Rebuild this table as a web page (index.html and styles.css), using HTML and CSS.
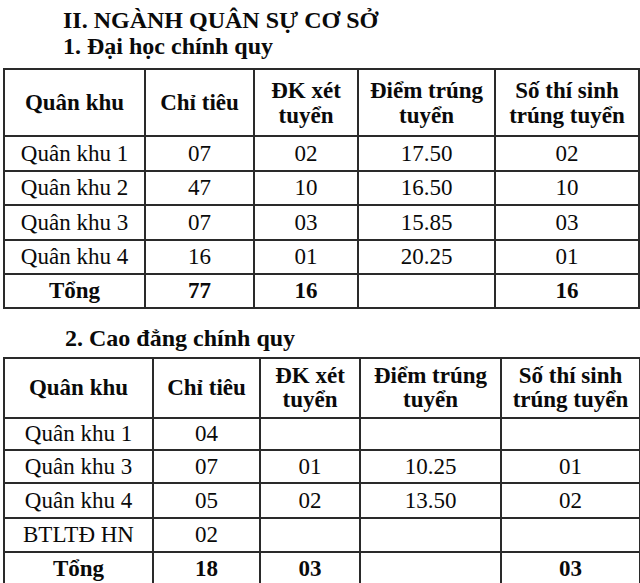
FILE: index.html
```html
<!DOCTYPE html>
<html lang="vi">
<head>
<meta charset="utf-8">
<link rel="stylesheet" href="styles.css">
</head>
<body>
<div class="page">
  <div class="heading">
    <div class="h-line">II. NGÀNH QUÂN SỰ CƠ SỞ</div>
    <div class="h-line">1. Đại học chính quy</div>
  </div>
  <table class="grid t1">
    <colgroup>
      <col class="c1"><col class="c2"><col class="c3"><col class="c4"><col class="c5">
    </colgroup>
    <tr class="head">
      <th>Quân khu</th><th>Chỉ tiêu</th><th>ĐK xét<br>tuyển</th><th>Điểm trúng<br>tuyển</th><th>Số thí sinh<br>trúng tuyển</th>
    </tr>
    <tr class="r35"><td>Quân khu 1</td><td>07</td><td>02</td><td>17.50</td><td>02</td></tr>
    <tr class="r34"><td>Quân khu 2</td><td>47</td><td>10</td><td>16.50</td><td>10</td></tr>
    <tr class="r35"><td>Quân khu 3</td><td>07</td><td>03</td><td>15.85</td><td>03</td></tr>
    <tr class="r34"><td>Quân khu 4</td><td>16</td><td>01</td><td>20.25</td><td>01</td></tr>
    <tr class="r34 total"><td>Tổng</td><td>77</td><td>16</td><td></td><td>16</td></tr>
  </table>
  <div class="subheading">2. Cao đẳng chính quy</div>
  <table class="grid t2">
    <colgroup>
      <col class="d1"><col class="d2"><col class="d3"><col class="d4"><col class="d5">
    </colgroup>
    <tr class="head2">
      <th>Quân khu</th><th>Chỉ tiêu</th><th>ĐK xét<br>tuyển</th><th>Điểm trúng<br>tuyển</th><th>Số thí sinh<br>trúng tuyển</th>
    </tr>
    <tr class="r32"><td>Quân khu 1</td><td>04</td><td></td><td></td><td></td></tr>
    <tr class="r33"><td>Quân khu 3</td><td>07</td><td>01</td><td>10.25</td><td>01</td></tr>
    <tr class="r35"><td>Quân khu 4</td><td>05</td><td>02</td><td>13.50</td><td>02</td></tr>
    <tr class="r34"><td>BTLTĐ HN</td><td>02</td><td></td><td></td><td></td></tr>
    <tr class="r34 total"><td>Tổng</td><td>18</td><td>03</td><td></td><td>03</td></tr>
  </table>
</div>
</body>
</html>
```
FILE: styles.css
```css
html, body {
  margin: 0;
  padding: 0;
  background: #ffffff;
}
body {
  font-family: "Liberation Serif", "Times New Roman", serif;
  color: #0a0a0a;
}
.page {
  padding: 7px 0 0 3px;
}
.heading {
  padding-left: 60px;
  font-weight: bold;
  font-size: 24px;
  line-height: 26px;
}
.grid {
  border-collapse: collapse;
  table-layout: fixed;
  margin-top: 9px;
}
.grid th, .grid td {
  border: 2px solid #2a2a2a;
  text-align: center;
  vertical-align: middle;
  padding: 0;
  font-size: 23px;
}
.grid th {
  font-weight: bold;
  line-height: 25px;
}
.grid td {
  line-height: 26px;
}
.total td {
  font-weight: bold;
}
.t1 { width: 635px; }
.c1 { width: 141px; }
.c2 { width: 109px; }
.c3 { width: 104px; }
.c4 { width: 137px; }
.c5 { width: 144px; }
.head { height: 67px; }
.r35 { height: 35px; }
.r34 { height: 34px; }
.r33 { height: 33px; }
.r32 { height: 32px; }
.subheading {
  padding-left: 62px;
  font-weight: bold;
  font-size: 24px;
  line-height: 26px;
  margin-top: 16px;
}
.t2 {
  width: 636px;
  margin-top: 6px;
}
.d1 { width: 149px; }
.d2 { width: 107px; }
.d3 { width: 100px; }
.d4 { width: 141px; }
.d5 { width: 139px; }
.head2 { height: 60px; }
.head2 th { line-height: 24px; }
```
